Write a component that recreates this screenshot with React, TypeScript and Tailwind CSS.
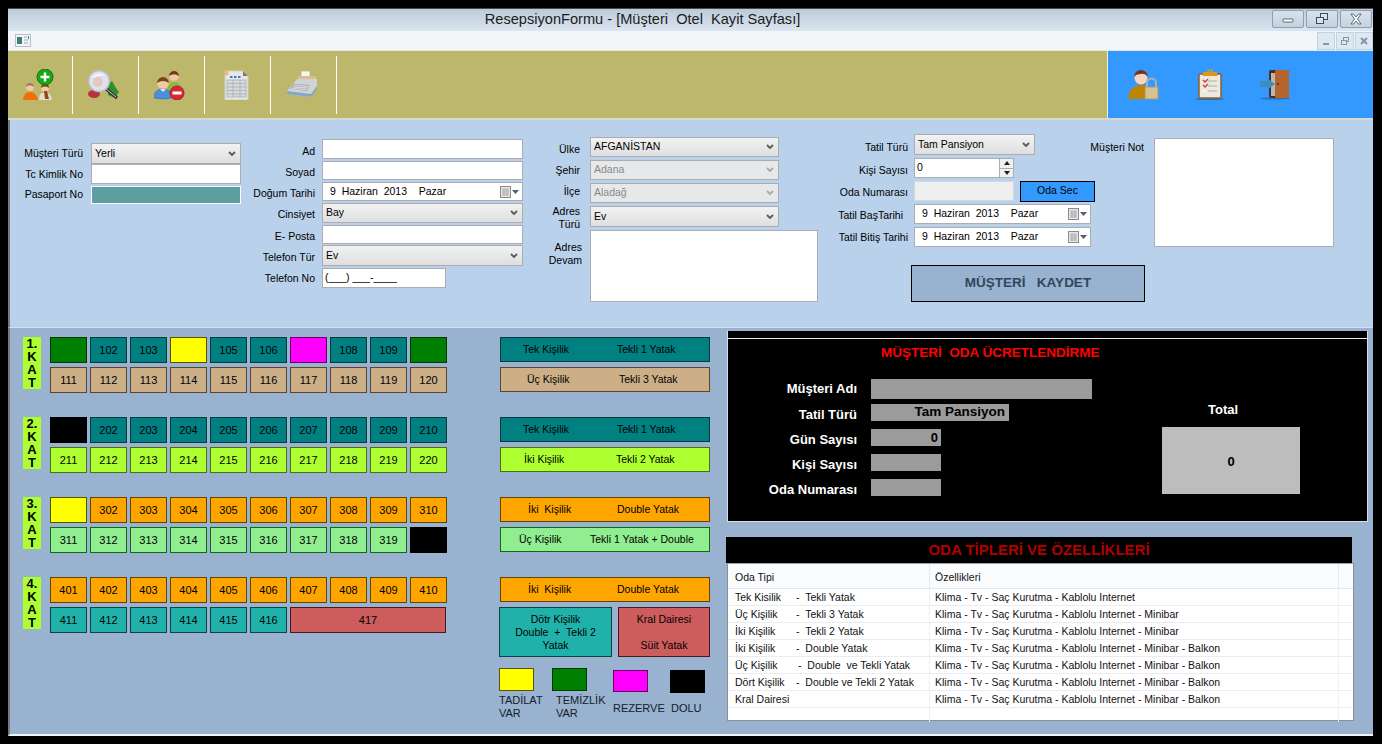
import React from 'react';

const FONT = "font-['Liberation_Sans',Arial,sans-serif]";

// --- toolbar icons ---
const Head = ({ x, y, hair, skin = '#f2c9a5', r = 5 }: { x: number; y: number; hair: string; skin?: string; r?: number }) => (
  <g>
    <circle cx={x} cy={y} r={r} fill={skin} />
    <path d={`M${x - r} ${y} a${r} ${r} 0 0 1 ${r * 2} 0 q-${r} -${r * 0.7} -${r * 2} 0z`} fill={hair} />
  </g>
);

const AddPeopleIcon = () => (
  <svg width="32" height="32" viewBox="0 0 32 32">
    <Head x={8} y={18} hair="#9a7b5c" r={4} />
    <path d="M1 31 q1 -8 7 -8 q6 0 8 8z" fill="#ee7203" />
    <Head x={23} y={19} hair="#7a3f17" r={4} />
    <path d="M17 31 q0 -7 3 -7 l5 0 q4 0 5 7z" fill="#e6dcd0" />
    <path d="M22 22 h3 l2 8 h-4z" fill="#8a4a1f" />
    <circle cx="23" cy="8" r="8" fill="#19a71a" />
    <circle cx="23" cy="8" r="8" fill="none" stroke="#0d7a10" />
    <path d="M23 3.5 v9 M18.5 8 h9" stroke="#fff" strokeWidth="2.4" />
  </svg>
);

const SearchIcon = () => (
  <svg width="32" height="30" viewBox="0 0 32 30">
    <ellipse cx="6" cy="24" rx="6" ry="4" fill="#b8333c" />
    <path d="M20 14 l4 -3 l4 7 l3 4 l-4 6 l-7 -3z" fill="#2f8f2f" />
    <path d="M17 18 L29 28" stroke="#333" strokeWidth="3" />
    <path d="M17 18 L28 27" stroke="#c8c8c8" strokeWidth="1" />
    <circle cx="11" cy="11" r="10.5" fill="#dfe2ea" stroke="#b9bcc6" strokeWidth="1.5" />
    <circle cx="10" cy="12" r="5" fill="#e6c7c4" />
    <path d="M3 8 q6 -6 14 -3 q-7 0 -14 3z" fill="#fff" />
  </svg>
);

const RemovePeopleIcon = () => (
  <svg width="31" height="31" viewBox="0 0 31 31">
    <Head x={20} y={7} hair="#6d3b14" r={5} />
    <path d="M13 24 q0 -11 7 -11 q7 0 8 9 l-8 4z" fill="#8bb93f" />
    <Head x={9} y={14} hair="#7a4318" r={6} />
    <path d="M0 29 q0 -9 9 -9 q8 0 9 9 q-9 2 -18 0z" fill="#4a8fdc" stroke="#2d6ab0" strokeWidth=".6" />
    <path d="M6 20 l3 3 l3 -3z" fill="#dcebf7" />
    <circle cx="23" cy="24" r="7" fill="#d9282f" stroke="#b51c22" />
    <rect x="18.5" y="22.5" width="9" height="3" fill="#fff" />
  </svg>
);

const SheetIcon = () => (
  <svg width="26" height="30" viewBox="0 0 26 30">
    <path d="M2 1 h18 l5 5 v24 h-23z" fill="#e6e8e6" stroke="#cfcfc6" />
    <path d="M20 1 l5 5 h-5z" fill="#777" />
    <circle cx="3" cy="3" r="2.5" fill="#e0b98a" />
    <rect x="7" y="6" width="2.5" height="2" fill="#3f7fc0" />
    <rect x="11" y="6" width="2.5" height="2" fill="#3f7fc0" />
    <rect x="15" y="6" width="2.5" height="2" fill="#3f7fc0" />
    <g stroke="#aab0b4" strokeWidth=".8" fill="none">
      <rect x="4" y="10" width="19" height="17" fill="#d6dadb" />
      <path d="M4 13.5 h19 M4 17 h19 M4 20.5 h19 M4 24 h19 M10 10 v17 M17 10 v17" />
    </g>
  </svg>
);

const RegisterIcon = () => (
  <svg width="32" height="27" viewBox="0 0 32 27">
    <rect x="15" y="0" width="9" height="6" fill="#f4f4f0" stroke="#999" strokeWidth=".5" />
    <path d="M12 5 h18 v5 h-18z" fill="#d9c08a" />
    <path d="M11 8 l20 0 l0 8 l-6 10 l-24 -3 l0 -3z" fill="#cfd3d6" />
    <path d="M1 20 l24 3 l0 3 l-24 -3z" fill="#7fa9c9" />
    <path d="M25 23 l6 -8 v3 l-6 8z" fill="#8fa5b5" />
    <path d="M7 13 l17 1 l-3 6 l-17 -2z" fill="#a8adb0" />
    <g stroke="#e8e8e8" strokeWidth=".8"><path d="M8 14.5 l15 1 M6.5 16 l15 1 M5.5 17.5 l15 1" /></g>
  </svg>
);

const LockUserIcon = () => (
  <svg width="32" height="32" viewBox="0 0 32 32">
    <circle cx="13" cy="9" r="6.5" fill="#f5d6c2" />
    <path d="M6 8 a7 7 0 0 1 14 0 q-3 -4 -7 -3 q-5 0 -7 3z" fill="#6a3a1e" />
    <path d="M0 30 q1 -12 11 -14 l5 0 q4 1 6 5 v9z" fill="#c08300" />
    <rect x="17" y="18" width="13" height="12" fill="#d6c28f" stroke="#a89a6c" />
    <path d="M19 18 v-4 a4.5 4.5 0 0 1 9 0 v4" fill="none" stroke="#b0b0aa" strokeWidth="2" />
  </svg>
);

const ClipboardIcon = () => (
  <svg width="30" height="32" viewBox="0 0 30 32">
    <ellipse cx="15" cy="30" rx="15" ry="1" fill="#2a6fb8" />
    <rect x="4" y="5" width="22" height="24" rx="1" fill="#ece9e0" stroke="#8f5f2d" strokeWidth="1.5" />
    <rect x="8" y="3" width="14" height="4" fill="#d99a1c" />
    <circle cx="15" cy="3" r="2" fill="none" stroke="#d99a1c" strokeWidth="1.5" />
    <path d="M8 11 l2 2 l3 -3 M8 16 l2 2 l3 -3" stroke="#d23a3a" strokeWidth="1.3" fill="none" />
    <path d="M13 12 h9 M13 17 h9 M13 22 h9" stroke="#b0b0a8" />
    <path d="M8 22 h2" stroke="#fff" strokeWidth="1.5" />
  </svg>
);

const DoorIcon = () => (
  <svg width="30" height="30" viewBox="0 0 30 30">
    <ellipse cx="15" cy="28.5" rx="15" ry="1" fill="#2a6fb8" />
    <rect x="9" y="0" width="20" height="28" rx="2" fill="#4a2e24" />
    <rect x="11" y="3" width="5" height="23" fill="#b4b8bc" />
    <rect x="15" y="0" width="14" height="28" rx="1" fill="#b5642c" />
    <circle cx="18" cy="14" r="1" fill="#5a2a10" />
    <path d="M0 11 h7 v-3 l8 6 l-8 6 v-3 h-7z" fill="#3f8dbf" />
  </svg>
);

const AppIcon = () => (
  <svg width="16" height="13" viewBox="0 0 16 13">
    <rect x=".5" y=".5" width="15" height="12" fill="#f4f6f6" stroke="#b8bec4" />
    <rect x="2" y="3" width="5" height="7" fill="#3a7f7a" />
    <path d="M9 3 h3 M9 6 h4 M9 9 h4" stroke="#9aa4aa" />
    <rect x="13" y="2" width="1" height="3" fill="#178f8f" />
  </svg>
);

const Caption = ({ kind }: { kind: 'min' | 'max' | 'close' }) => (
  <div className="flex h-[18px] w-[32px] items-center justify-center rounded-[2px] border border-[#8e9db3] bg-gradient-to-b from-[#d7e2ec] to-[#c4d2e0]">
    <svg width="14" height="12" viewBox="0 0 14 12">
      {kind === 'min' && <rect x="2" y="6" width="10" height="3" rx=".5" fill="#fff" stroke="#3c4a5c" strokeWidth=".8" />}
      {kind === 'max' && (
        <g fill="#d7e2ec" stroke="#3c4a5c" strokeWidth="1">
          <rect x="5.5" y=".5" width="7" height="6" />
          <rect x="1.5" y="4.5" width="7" height="6" />
        </g>
      )}
      {kind === 'close' && (
        <path d="M2 1 h2.5 L7 4 9.5 1 H12 L8.5 6 12 11 H9.5 L7 8 4.5 11 H2 L5.5 6z" fill="#fff" stroke="#3c4a5c" strokeWidth=".8" />
      )}
    </svg>
  </div>
);

const MdiButton = ({ kind }: { kind: 'min' | 'max' | 'close' }) => (
  <div className="flex h-[18px] w-[18px] items-center justify-center border border-[#c2d2e2] bg-[#dde8f2]">
    <svg width="10" height="10" viewBox="0 0 10 10">
      {kind === 'min' && <rect x="2" y="7" width="6" height="2" fill="#8795a3" />}
      {kind === 'max' && (
        <g fill="none" stroke="#8795a3">
          <rect x="3.5" y="1.5" width="5" height="4" />
          <rect x="1.5" y="4.5" width="5" height="4" fill="#dde8f2" />
        </g>
      )}
      {kind === 'close' && <path d="M2 2 L8 8 M8 2 L2 8" stroke="#8795a3" strokeWidth="2" />}
    </svg>
  </div>
);

// --- form controls ---
const Combo = ({ value, className = '', disabled = false }: { value: string; className?: string; disabled?: boolean }) => (
  <div
    className={`flex items-center justify-between border border-[#acacac] pl-[3px] pr-[4px] ${
      disabled ? 'bg-[#e6e8ea] text-[#8a8a8a]' : 'bg-gradient-to-b from-[#f2f2f2] to-[#dfdfdf] text-black'
    } ${className}`}
  >
    <span className="whitespace-pre">{value}</span>
    <svg width="8" height="6" viewBox="0 0 8 6">
      <path d="M1 1 L4 4 L7 1" fill="none" stroke={disabled ? '#a8a8a8' : '#5a5a5a'} strokeWidth="1.8" />
    </svg>
  </div>
);

const TextBox = ({ className = '', children }: { className?: string; children?: React.ReactNode }) => (
  <div className={`flex items-center border border-[#abadb3] bg-white px-[2px] ${className}`}>{children}</div>
);

const DatePick = ({ className = '' }: { className?: string }) => (
  <div className={`flex items-center justify-between border border-[#abadb3] bg-white pl-[7px] pr-[3px] ${className}`}>
    <span className="whitespace-pre">{'9  Haziran  2013    Pazar'}</span>
    <span className="flex items-center gap-[1px]">
      <svg width="11" height="12" viewBox="0 0 11 12">
        <rect x=".5" y=".5" width="10" height="11" fill="#e8e8e8" stroke="#8a8a8a" />
        <path d="M2 3 h7 M2 5 h7 M2 7 h7 M2 9 h7 M4 3 v7 M7 3 v7" stroke="#9a9a9a" strokeWidth=".7" />
      </svg>
      <svg width="7" height="4" viewBox="0 0 7 4">
        <path d="M0 0 h7 L3.5 4z" fill="#4a6078" />
      </svg>
    </span>
  </div>
);

const Row = ({
  label,
  labelW,
  gap,
  className = '',
  children,
}: {
  label: React.ReactNode;
  labelW: string;
  gap: string;
  className?: string;
  children: React.ReactNode;
}) => (
  <div className={`flex items-center ${className}`}>
    <div className={`shrink-0 text-right leading-[13px] text-black ${labelW} ${gap}`}>{label}</div>
    {children}
  </div>
);

// --- rooms ---
const TEAL = 'border-[#003c3c] bg-[#008080]';
const TAN = 'border-[#5c4528] bg-[#cdaf87]';
const LIME = 'border-[#4a7014] bg-[#adff2f]';
const ORANGE = 'border-[#664200] bg-[#ffa500]';
const PALE = 'border-[#0f6b0f] bg-[#90ee90]';
const SEA = 'border-[#0c4240] bg-[#20b2aa]';
const ROSE = 'border-[#4a1a1a] bg-[#cd5c5c]';
const GREEN = 'border-[#003800] bg-[#008000]';
const YELLOW = 'border-[#555500] bg-[#ffff00]';
const PINK = 'border-[#660066] bg-[#ff00ff]';
const BLACK = 'border-black bg-black';

const Room = ({ tone, label, className = 'w-[37px]' }: { tone: string; label?: string; className?: string }) => (
  <div className={`flex h-[26px] items-center justify-center border text-[11px] text-black ${tone} ${className}`}>{label}</div>
);

const Info = ({ tone, a, b, aCls }: { tone: string; a: string; b: string; aCls: string }) => (
  <div className={`flex h-[25px] w-[210px] items-center border text-black ${tone}`}>
    <span className={`shrink-0 whitespace-pre ${aCls}`}>{a}</span>
    <span className="whitespace-pre">{b}</span>
  </div>
);

const FloorTag = ({ n }: { n: number }) => (
  <div className="flex h-[52px] w-[18px] shrink-0 flex-col items-center bg-[#adff2f] text-[13px] leading-[13px] font-bold text-black">
    <span>{n}.</span>
    <span>K</span>
    <span>A</span>
    <span>T</span>
  </div>
);

const rooms = (start: number, n: number, tone: string, over: Record<number, string> = {}) =>
  Array.from({ length: n }, (_, i) => {
    const num = start + i;
    return over[num] ? <Room key={num} tone={over[num]} /> : <Room key={num} tone={tone} label={String(num)} />;
  });

const Floor = ({ n, children, info }: { n: number; children: React.ReactNode; info: React.ReactNode }) => (
  <div className="flex items-start">
    <FloorTag n={n} />
    <div className="ml-[9px] grid w-[397px] shrink-0 grid-cols-[repeat(10,37px)] gap-x-[3px] gap-y-[4px]">{children}</div>
    <div className="ml-[53px] flex flex-col gap-[5px]">{info}</div>
  </div>
);

const FEATURES = 'Klima - Tv - Saç Kurutma - Kablolu Internet';
const typeRows = [
  ['Tek Kisilik', '-  Tekli Yatak', FEATURES, 'w-[61px]'],
  ['Üç Kişilik', '-  Tekli 3 Yatak', FEATURES + ' - Minibar', 'w-[61px]'],
  ['İki Kişilik', '-  Tekli 2 Yatak', FEATURES + ' - Minibar', 'w-[61px]'],
  ['İki Kişilik', '-  Double Yatak', FEATURES + ' - Minibar - Balkon', 'w-[61px]'],
  ['Üç Kişilik', '-  Double  ve Tekli Yatak', FEATURES + ' - Minibar - Balkon', 'w-[63px]'],
  ['Dört Kişilik', '-  Double ve Tekli 2 Yatak', FEATURES + ' - Minibar - Balkon', 'w-[61px]'],
  ['Kral Dairesi', '', FEATURES + ' - Minibar - Balkon', 'w-[61px]'],
];

const Bill = ({ label, className, labelCls = 'pt-[4px]', children }: { label: string; className: string; labelCls?: string; children?: React.ReactNode }) => (
  <div className={`flex items-center ${className}`}>
    <div className={`w-[129px] shrink-0 text-right text-[13px] font-bold text-white ${labelCls}`}>{label}</div>
    {children}
  </div>
);

const App: React.FC = () => {
  return (
    <div className={`h-[744px] w-[1382px] overflow-hidden bg-black pt-[8px] pl-[8px] text-[10.5px] ${FONT}`}>
      <div className="flex h-[728px] w-[1365px] flex-col border-t border-[#4a4a4a]">
        {/* title bar */}
        <div className="relative flex h-[22px] shrink-0 items-center justify-center bg-gradient-to-b from-[#bccad8] to-[#dbe6f1] pr-[96px]">
          <span className="whitespace-pre text-[14.6px] text-[#1c1c1c]">{'ResepsiyonFormu - [Müşteri  Otel  Kayit Sayfası]'}</span>
          <div className="absolute top-[1px] right-[1px] flex gap-[2px]">
            <Caption kind="min" />
            <Caption kind="max" />
            <Caption kind="close" />
          </div>
        </div>

        {/* mdi strip */}
        <div className="flex h-[20px] shrink-0 items-center justify-between border-b border-[#e4e6e8] bg-[#f4f5f8] pl-[7px]">
          <AppIcon />
          <div className="flex gap-px">
            <MdiButton kind="min" />
            <MdiButton kind="max" />
            <MdiButton kind="close" />
          </div>
        </div>

        {/* toolbar */}
        <div className="flex h-[67px] shrink-0">
          <div className="flex w-[1100px] items-center border-r border-[#f4f0d8] bg-[#bdb76b]">
            {[AddPeopleIcon, SearchIcon, RemovePeopleIcon, SheetIcon, RegisterIcon].map((Icon, i) => (
              <div key={i} className="flex h-[58px] w-[66px] items-center justify-center border-r-[1px] border-white pr-[4px] first:w-[65px]">
                <Icon />
              </div>
            ))}
          </div>
          <div className="flex flex-1 items-center gap-[35px] bg-[#3399ff] pl-[20px]">
            <LockUserIcon />
            <ClipboardIcon />
            <DoorIcon />
          </div>
        </div>
        <div className="h-[2px] shrink-0 bg-[#d6d8d6]" />

        {/* customer form */}
        <div className="flex h-[207px] shrink-0 border-l-2 border-[#7a7a7a] bg-[#b9d1ea] text-black">
          {/* col 1 */}
          <div className="mt-[23px] flex w-[231px] shrink-0 flex-col">
            <Row label="Müşteri Türü" labelW="w-[73px]" gap="mr-[8px]" className="h-[21px]">
              <Combo value="Yerli" className="h-[21px] w-[150px]" />
            </Row>
            <Row label="Tc Kimlik No" labelW="w-[73px]" gap="mr-[8px]" className="h-[20px]">
              <TextBox className="h-[20px] w-[150px]" />
            </Row>
            <Row label="Pasaport No" labelW="w-[73px]" gap="mr-[8px]" className="mt-px h-[19px]">
              <div className="h-[18px] w-[150px] border border-white bg-[#5f9ea0]" />
            </Row>
          </div>

          {/* col 2 */}
          <div className="mt-[19px] flex w-[282px] shrink-0 flex-col gap-[2px]">
            <Row label="Ad" labelW="w-[74px] pt-[5px]" gap="mr-[7px]" className="h-[20px]">
              <TextBox className="h-[20px] w-[201px]" />
            </Row>
            <Row label="Soyad" labelW="w-[74px] pt-[4px]" gap="mr-[7px]" className="h-[19px]">
              <TextBox className="h-[19px] w-[201px]" />
            </Row>
            <Row label="Doğum Tarihi" labelW="w-[74px] pt-[4px]" gap="mr-[7px]" className="h-[19px]">
              <DatePick className="h-[19px] w-[201px]" />
            </Row>
            <Row label="Cinsiyet" labelW="w-[74px] pt-[3px]" gap="mr-[7px]" className="h-[20px]">
              <Combo value="Bay" className="h-[20px] w-[201px]" />
            </Row>
            <Row label="E- Posta" labelW="w-[74px] pt-[3px]" gap="mr-[7px]" className="h-[19px]">
              <TextBox className="h-[19px] w-[201px]" />
            </Row>
            <Row label="Telefon Tür" labelW="w-[74px] pt-[3px]" gap="mr-[7px]" className="-mt-px h-[21px]">
              <Combo value="Ev" className="h-[21px] w-[201px]" />
            </Row>
            <Row label="Telefon No" labelW="w-[74px]" gap="mr-[7px]" className="h-[20px]">
              <TextBox className="h-[20px] w-[124px]">
                <span className="whitespace-pre text-black">{'(___) ___-____'}</span>
              </TextBox>
            </Row>
          </div>

          {/* col 3 */}
          <div className="mt-[17px] flex w-[295px] shrink-0 flex-col">
            <Row label="Ülke" labelW="w-[57px] pt-[4px]" gap="mr-[10px]" className="h-[20px]">
              <Combo value="AFGANİSTAN" className="h-[20px] w-[189px]" />
            </Row>
            <Row label="Şehir" labelW="w-[57px]" gap="mr-[10px]" className="mt-[3px] h-[20px]">
              <Combo value="Adana" disabled className="h-[20px] w-[189px]" />
            </Row>
            <Row label="İlçe" labelW="w-[57px] pb-[3px]" gap="mr-[10px]" className="mt-[3px] h-[20px]">
              <Combo value="Aladağ" disabled className="h-[20px] w-[189px]" />
            </Row>
            <Row label={<>Adres<br />Türü</>} labelW="w-[57px] pt-[2px]" gap="mr-[10px]" className="mt-[3px] h-[21px]">
              <Combo value="Ev" className="h-[21px] w-[189px]" />
            </Row>
            <div className="mt-[3px] flex items-start">
              <div className="mt-[11px] mr-[8px] w-[59px] shrink-0 text-right leading-[13px]">
                Adres
                <br />
                Devam
              </div>
              <TextBox className="h-[72px] w-[228px]" />
            </div>
          </div>

          {/* col 4 + note */}
          <div className="mt-[14px] flex flex-col">
            <div className="flex items-start">
              <div className="flex w-[277px] shrink-0 flex-col gap-[3px]">
                <Row label="Tatil Türü" labelW="w-[90px] pt-[6px]" gap="mr-[6px]" className="h-[21px]">
                  <Combo value="Tam Pansiyon" className="h-[21px] w-[121px]" />
                </Row>
                <Row label="Kişi Sayısı" labelW="w-[90px] pt-[4px]" gap="mr-[6px]" className="h-[20px]">
                  <TextBox className="h-[20px] w-[100px] justify-between !pr-0">
                    <span>0</span>
                    <span className="flex h-full w-[14px] flex-col border-l border-[#abadb3] bg-[#f0f0f0]">
                      <span className="flex flex-1 items-center justify-center border-b border-[#abadb3]">
                        <svg width="6" height="4" viewBox="0 0 6 4"><path d="M0 4 L3 0 L6 4z" fill="#222" /></svg>
                      </span>
                      <span className="flex flex-1 items-center justify-center">
                        <svg width="6" height="4" viewBox="0 0 6 4"><path d="M0 0 L3 4 L6 0z" fill="#222" /></svg>
                      </span>
                    </span>
                  </TextBox>
                </Row>
                <Row label="Oda Numarası" labelW="w-[90px] pt-[2px]" gap="mr-[6px]" className="h-[20px]">
                  <div className="h-[20px] w-[100px] border border-[#d0dae4] bg-[#efefef]" />
                  <div className="ml-[6px] flex h-[21px] w-[75px] items-center justify-center border border-black bg-[#3399ff]">Oda Sec</div>
                </Row>
                <Row label="Tatil BaşTarihi" labelW="w-[85px] pt-[2px]" gap="mr-[11px]" className="h-[20px]">
                  <DatePick className="h-[20px] w-[177px]" />
                </Row>
                <Row label="Tatil Bitiş Tarihi" labelW="w-[90px]" gap="mr-[6px]" className="h-[20px]">
                  <DatePick className="h-[20px] w-[177px]" />
                </Row>
              </div>
              <div className="mt-[6px] flex w-[49px] shrink-0 justify-end whitespace-nowrap pt-[1px] leading-[13px]">Müşteri Not</div>
              <TextBox className="mt-[4px] ml-[10px] h-[109px] w-[180px]" />
            </div>
            <div className="mt-[18px] ml-[93px] flex h-[37px] w-[234px] items-center justify-center border border-black bg-[#98b2d0] text-[13.5px] font-bold whitespace-pre text-[#32465a]">
              {'MÜŞTERİ   KAYDET'}
            </div>
          </div>
        </div>

        {/* rooms + billing */}
        <div className="flex flex-1 items-start border-t border-[#d0e0f0] border-b-2 border-b-[#f0f4f8] border-l-2 border-l-[#7a7a7a] bg-[#98b2d0] pl-[13px]">
          <div className="flex w-[687px] shrink-0 flex-col gap-[24px] pt-[9px]">
            <Floor
              n={1}
              info={
                <>
                  <Info tone={TEAL} a="Tek Kişilik" b="Tekli 1 Yatak" aCls="w-[116px] pl-[22px]" />
                  <Info tone={TAN} a="Üç Kişilik" b="Tekli 3 Yatak" aCls="w-[118px] pl-[26px]" />
                </>
              }
            >
              {rooms(101, 10, TEAL, { 101: GREEN, 104: YELLOW, 107: PINK, 110: GREEN })}
              {rooms(111, 10, TAN)}
            </Floor>
            <Floor
              n={2}
              info={
                <>
                  <Info tone={TEAL} a="Tek Kişilik" b="Tekli 1 Yatak" aCls="w-[116px] pl-[22px]" />
                  <Info tone={LIME} a="İki Kişilik" b="Tekli 2 Yatak" aCls="w-[115px] pl-[23px]" />
                </>
              }
            >
              {rooms(201, 10, TEAL, { 201: BLACK })}
              {rooms(211, 10, LIME)}
            </Floor>
            <Floor
              n={3}
              info={
                <>
                  <Info tone={ORANGE} a="İki  Kişilik" b="Double Yatak" aCls="w-[116px] pl-[27px]" />
                  <Info tone={PALE} a="Üç Kişilik" b="Tekli 1 Yatak + Double" aCls="w-[89px] pl-[18px]" />
                </>
              }
            >
              {rooms(301, 10, ORANGE, { 301: YELLOW })}
              {rooms(311, 10, PALE, { 320: BLACK })}
            </Floor>
            <Floor
              n={4}
              info={
                <>
                  <Info tone={ORANGE} a="İki  Kişilik" b="Double Yatak" aCls="w-[116px] pl-[27px]" />
                  <div className="flex justify-between">
                    <div className={`-ml-px flex h-[50px] w-[113px] flex-col items-center justify-center border text-center leading-[13px] whitespace-pre text-black ${SEA}`}>
                      <span>Dötr Kişilik</span>
                      <span>{'Double  +  Tekli 2'}</span>
                      <span>Yatak</span>
                    </div>
                    <div className={`flex h-[50px] w-[92px] flex-col items-center justify-center border text-center leading-[13px] text-black ${ROSE}`}>
                      <span>Kral Dairesi</span>
                      <span>&nbsp;</span>
                      <span>Süit Yatak</span>
                    </div>
                  </div>
                  <div className="mt-[6px] -ml-px flex items-start text-[11px] leading-[13px] text-[#14202c]">
                    <div className="w-[53px]">
                      <div className={`h-[23px] w-[35px] border ${YELLOW}`} />
                      <div className="mt-[3px] whitespace-nowrap">TADİLAT<br />VAR</div>
                    </div>
                    <div className="w-[61px]">
                      <div className={`h-[23px] w-[35px] border ${GREEN}`} />
                      <div className="mt-[3px] ml-[4px] whitespace-nowrap">TEMİZLİK<br />VAR</div>
                    </div>
                    <div className="mt-[2px] w-[57px]">
                      <div className={`h-[22px] w-[35px] border ${PINK}`} />
                      <div className="mt-[10px]">REZERVE</div>
                    </div>
                    <div className="mt-[2px]">
                      <div className={`h-[23px] w-[35px] border ${BLACK}`} />
                      <div className="mt-[9px] ml-px">DOLU</div>
                    </div>
                  </div>
                </>
              }
            >
              {rooms(401, 10, ORANGE)}
              {rooms(411, 6, SEA)}
              <Room tone={ROSE} label="417" className="col-span-4 w-[156px]" />
            </Floor>
          </div>

          <div className="ml-[17px] flex flex-col pt-[3px]">
            {/* billing */}
            <div className="h-[191px] w-[641px] border-r border-b border-l border-[#d5dfe9] bg-black">
              <div className="mt-[7px] h-px bg-[#e8e8e8]" />
              <div className="flex">
                <div className="flex w-[434px] shrink-0 flex-col">
                  <div className="mt-[4px] h-[36px] pl-[153px] text-[13.5px] font-bold whitespace-pre text-[#ff0000]">{'MÜŞTERİ  ODA ÜCRETLENDİRME'}</div>
                  <Bill label="Müşteri Adı" labelCls="" className="h-[20px]">
                    <div className="ml-[14px] h-[20px] w-[221px] bg-[#9b9b9b]" />
                  </Bill>
                  <Bill label="Tatil Türü" className="mt-[5px] h-[17px]">
                    <div className="ml-[14px] flex h-[17px] w-[138px] items-center justify-end bg-[#9b9b9b] pr-[4px] text-[13.5px] font-bold text-black">Tam Pansiyon</div>
                  </Bill>
                  <Bill label="Gün Sayısı" className="mt-[8px] h-[17px]">
                    <div className="ml-[14px] flex h-[17px] w-[70px] items-center justify-end bg-[#9b9b9b] pr-[3px] text-[13px] font-bold text-black">0</div>
                  </Bill>
                  <Bill label="Kişi Sayısı" className="mt-[8px] h-[17px]">
                    <div className="ml-[14px] h-[17px] w-[70px] bg-[#9b9b9b]" />
                  </Bill>
                  <Bill label="Oda Numarası" className="mt-[8px] h-[17px]">
                    <div className="ml-[14px] h-[17px] w-[70px] bg-[#9b9b9b]" />
                  </Bill>
                </div>
                <div className="flex flex-col pt-[61px]">
                  <div className="h-[27px] w-[138px] pl-[46px] text-[13px] font-bold text-white">Total</div>
                  <div className="flex h-[67px] w-[138px] items-center justify-center bg-[#bdbdbd] pt-[2px] text-[13px] font-bold text-black">0</div>
                </div>
              </div>
            </div>

            {/* room types */}
            <div className="-ml-px mt-[15px] flex h-[26px] w-[626px] items-center justify-center bg-black pt-px text-[15px] font-bold text-[#b00000]">ODA TİPLERİ VE ÖZELLİKLERİ</div>
            <div className="h-[158px] w-[627px] border border-[#8a8f95] border-t-[#9aa0a6] bg-white text-[#111]">
              <div className="flex h-[25px] border-b border-[#dde8f4] bg-[#fbfcfe]">
                <div className="flex w-[202px] items-center border-r border-[#e2e9f2] pt-[3px] pl-[7px]">Oda Tipi</div>
                <div className="flex flex-1 items-center border-r border-[#e2e9f2] pt-[3px] pl-[5px]">Özellikleri</div>
                <div className="w-[14px]" />
              </div>
              {typeRows.map(([name, rest, features, nameW]) => (
                <div key={name + rest} className="flex h-[17px] border-b border-[#e8edf3]">
                  <div className="flex w-[202px] items-center border-r border-[#eef1f5] pt-[2px] pl-[7px] whitespace-pre">
                    <span className={`shrink-0 ${nameW}`}>{name}</span>
                    <span>{rest}</span>
                  </div>
                  <div className="flex flex-1 items-center border-r border-[#eef1f5] pt-[2px] pl-[5px] whitespace-pre">{features}</div>
                  <div className="w-[14px]" />
                </div>
              ))}
              <div className="flex h-[14px]">
                <div className="w-[202px] border-r border-[#eef1f5]" />
                <div className="flex-1 border-r border-[#eef1f5]" />
                <div className="w-[14px]" />
              </div>
            </div>
          </div>
        </div>
      </div>
    </div>
  );
};

export default App;
